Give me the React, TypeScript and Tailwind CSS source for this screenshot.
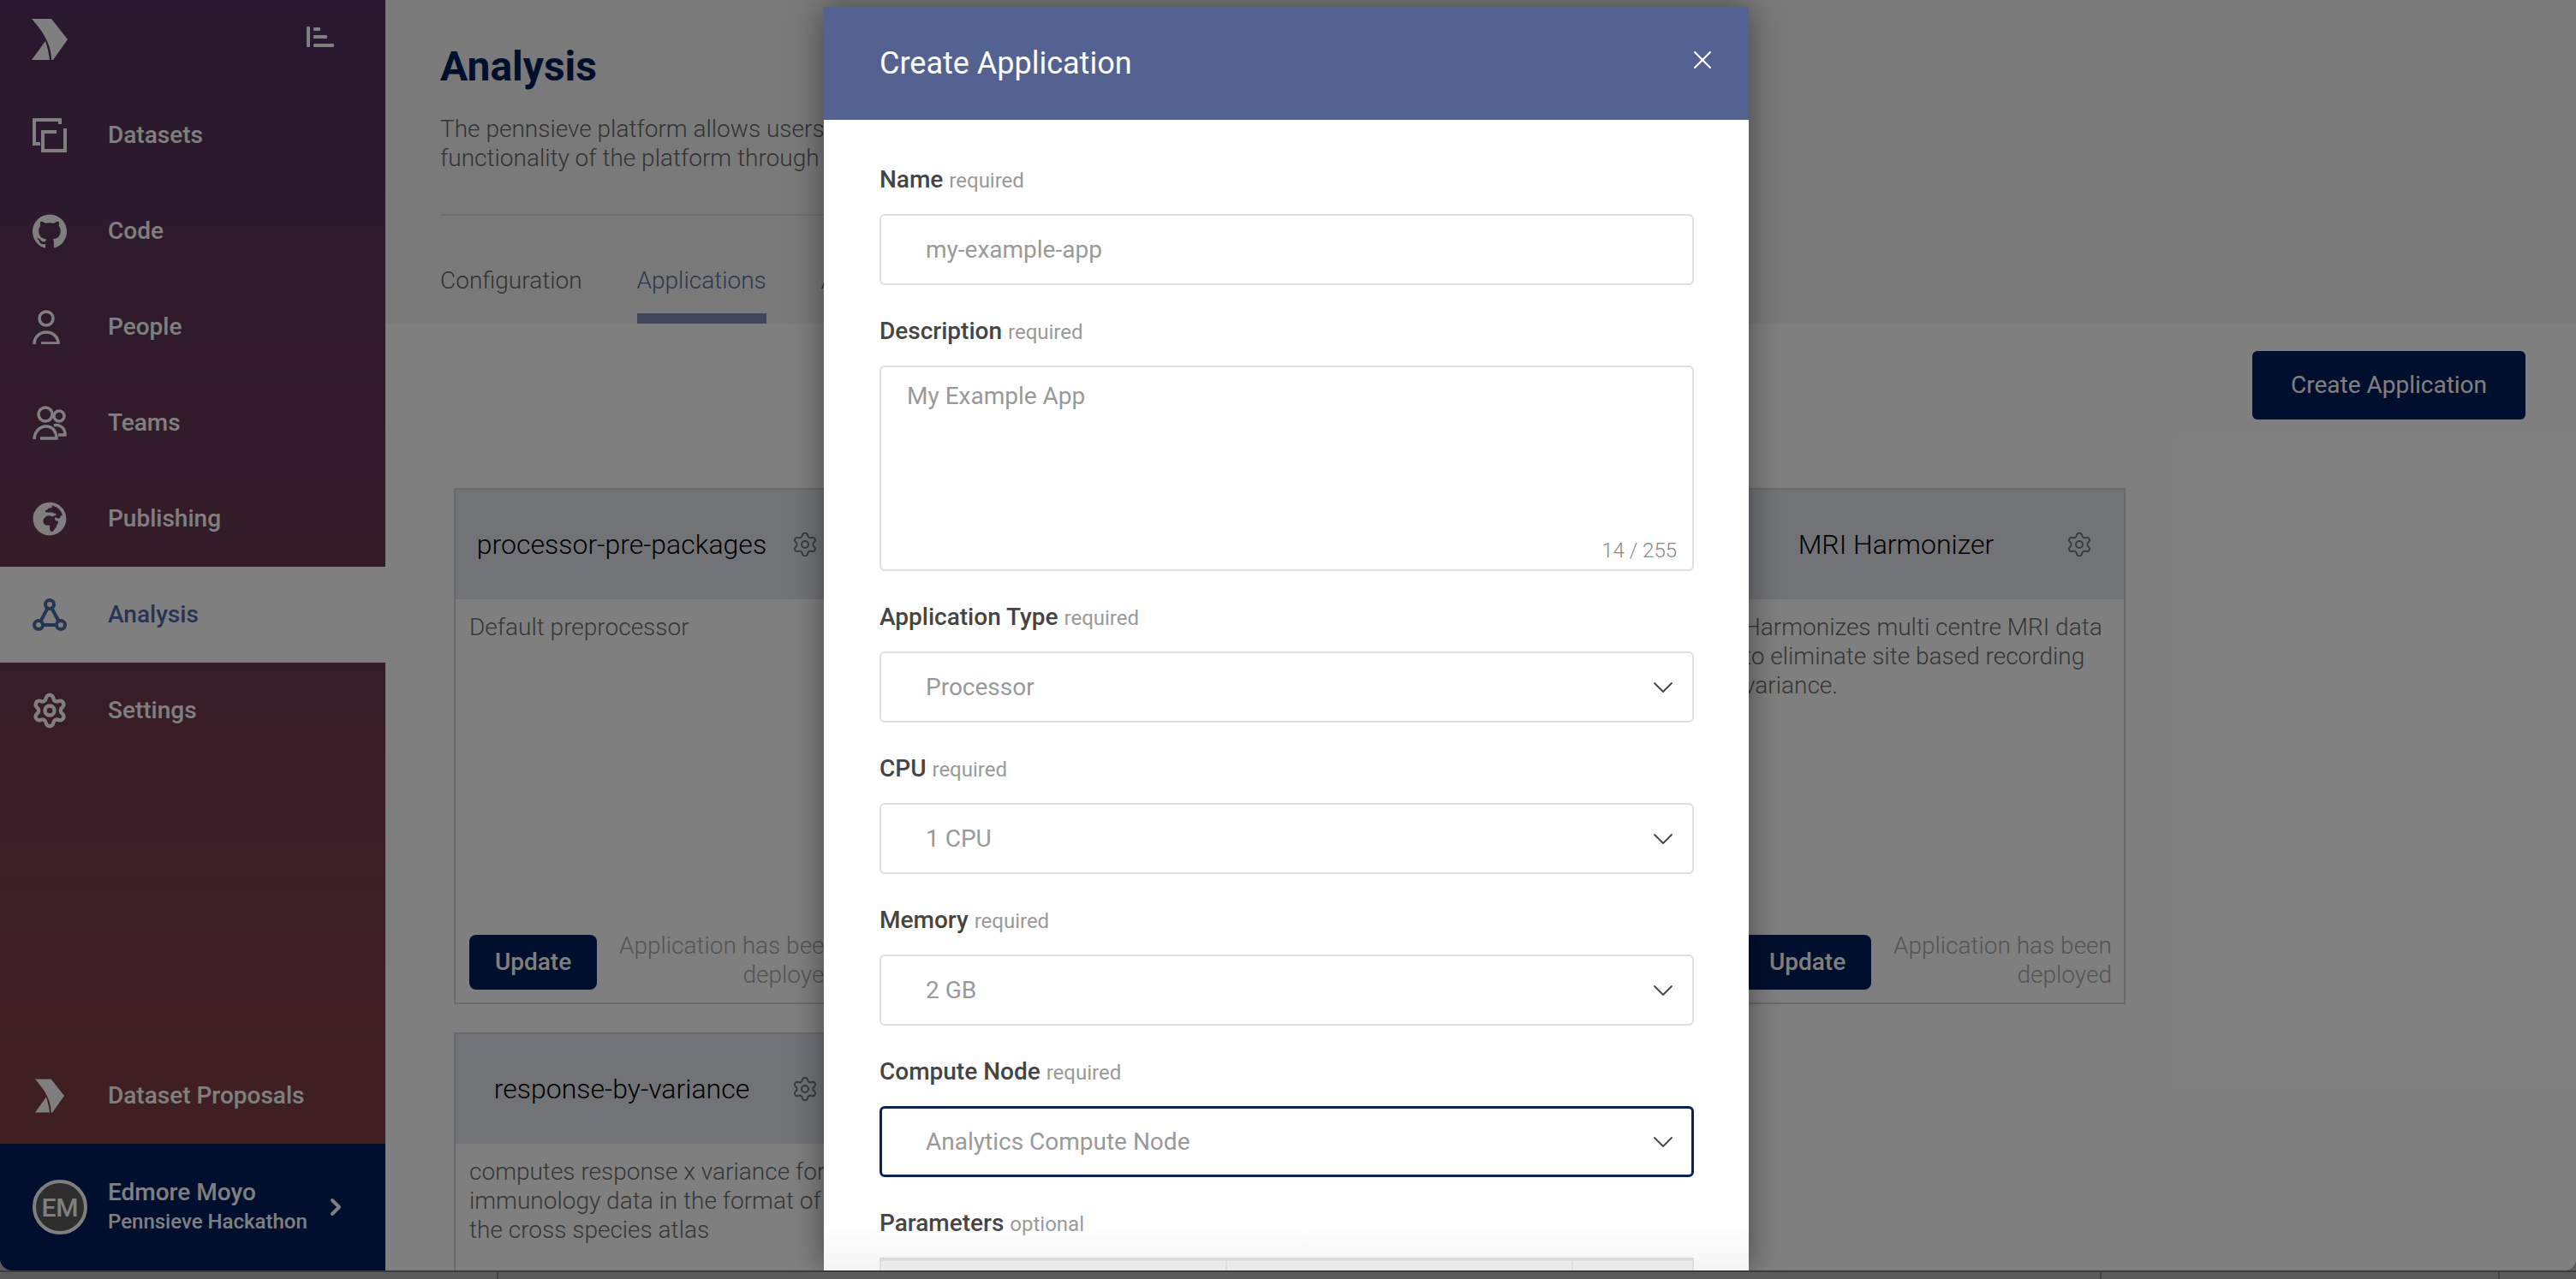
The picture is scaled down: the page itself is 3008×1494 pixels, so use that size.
import { ChevronDown, ChevronRight, Settings, X } from "lucide-react";
import { FaGlobeAfrica } from "react-icons/fa";
import { SiGithub } from "react-icons/si";
import type { ReactNode } from "react";

function Logo({ className }: { className: string }) {
  return (
    <svg viewBox="0 0 42 48" className={className} fill="currentColor">
      <path d="M0 0H23L42 24L25 48H23C23 38 20 30 17 24C13 15 6 7 0 0Z" />
      <path d="M0 48L16 26C18 32 20 40 21 48Z" />
    </svg>
  );
}

function DatasetsIcon() {
  return (
    <svg viewBox="0 0 40 40" className="h-10 w-10" fill="none" stroke="currentColor" strokeWidth="4">
      <path d="M32 7V2H2V30H9" />
      <path d="M28 16H12V38H38V12" />
    </svg>
  );
}

function PeopleIcon() {
  return (
    <svg viewBox="0 0 40 40" className="h-10 w-10" fill="none" stroke="currentColor" strokeWidth="3.5">
      <circle cx="16" cy="10" r="8" />
      <path d="M2 40C2 32 8 26 16 26C24 26 30 32 30 39H10" />
    </svg>
  );
}

function TeamsIcon() {
  return (
    <svg viewBox="0 0 40 40" className="h-10 w-10" fill="none" stroke="currentColor" strokeWidth="3.5">
      <circle cx="15" cy="10" r="8" />
      <circle cx="31" cy="12" r="6" />
      <path d="M2 39C2 31 8 24 16 24C24 24 28 31 28 38H9" />
      <path d="M25 23C32 21 38 26 38 34H30" />
    </svg>
  );
}

function AnalysisIcon() {
  return (
    <svg viewBox="0 0 40 38" className="h-[38px] w-10" fill="none" stroke="currentColor" strokeWidth="4">
      <circle cx="20" cy="7" r="5" />
      <circle cx="7" cy="31" r="5" />
      <circle cx="33" cy="31" r="5" />
      <path d="M17.500 11.500L9.500 26.500M22.500 11.500L30.500 26.500M12 31H28" />
    </svg>
  );
}

const NAV: { label: string; icon: ReactNode; active?: boolean }[] = [
  { label: "Datasets", icon: <DatasetsIcon /> },
  { label: "Code", icon: <SiGithub className="h-10 w-10" /> },
  { label: "People", icon: <PeopleIcon /> },
  { label: "Teams", icon: <TeamsIcon /> },
  { label: "Publishing", icon: <FaGlobeAfrica className="h-10 w-10" /> },
  { label: "Analysis", icon: <AnalysisIcon />, active: true },
  { label: "Settings", icon: <Settings className="h-11 w-11 -mx-0.5" strokeWidth={2.4} /> },
];

function Sidebar() {
  return (
    <aside className="flex h-full w-[450px] shrink-0 flex-col bg-linear-to-b from-[#52305e] to-[#884040] text-white">
      <div className="flex h-[102px] shrink-0 items-start justify-between pl-[37px] pr-[60px] pt-[22px]">
        <Logo className="h-12 w-[42px]" />
        <svg viewBox="0 0 32 24" className="mt-[9px] h-6 w-8" fill="currentColor">
          <rect x="0" y="0" width="4" height="24" rx="1" />
          <rect x="8" y="1" width="8" height="4" rx="1" />
          <rect x="8" y="10" width="16" height="4" rx="1" />
          <rect x="8" y="20" width="24" height="4" rx="1" />
        </svg>
      </div>
      {NAV.map((item) => (
        <div
          key={item.label}
          className={
            item.active
              ? "flex h-[112px] shrink-0 items-center bg-white pl-[38px] text-[#506aa5]"
              : "flex h-[112px] shrink-0 items-center pl-[38px]"
          }
        >
          <span className="flex w-[88px] shrink-0">{item.icon}</span>
          <span className="text-[28px] font-medium">{item.label}</span>
        </div>
      ))}
      <div className="mt-auto flex h-[112px] shrink-0 items-center pl-[41px]">
        <span className="flex w-[85px] shrink-0">
          <Logo className="h-10 w-[34px]" />
        </span>
        <span className="text-[28px] font-medium">Dataset Proposals</span>
      </div>
      <div className="flex h-[148px] shrink-0 items-center bg-[#011f5b] pl-[38px]">
        <div className="flex h-16 w-16 shrink-0 items-center justify-center rounded-full border-4 border-white bg-[#5c5c5c] text-[30px] font-medium">
          EM
        </div>
        <div className="ml-6 flex w-[250px] flex-col">
          <span className="text-[28px] leading-[34px] font-medium">Edmore Moyo</span>
          <span className="text-[24px] leading-[34px] font-medium">Pennsieve Hackathon</span>
        </div>
        <ChevronRight className="h-8 w-8" strokeWidth={3} />
      </div>
    </aside>
  );
}

function AppCard({
  title,
  text,
  className,
  footer = true,
}: {
  title: string;
  text: string[];
  className?: string;
  footer?: boolean;
}) {
  return (
    <article className={`flex h-[603px] flex-col border-2 border-[#d4d4d4] ${className ?? ""}`}>
      <header className="flex h-[128px] shrink-0 items-center bg-[#e4e6ee]">
        <h3 className="w-[388px] text-center text-[32px] font-light text-black">{title}</h3>
        <Settings className="ml-1 h-8 w-8 text-[#76787c]" strokeWidth={1.5} />
      </header>
      <div className="flex flex-1 flex-col pt-[16px] pr-[14px] pb-[15px] pl-4">
        <p className="text-[28px] leading-[34px] font-light text-[#6c6c6c]">
          {text.map((line) => (
            <span key={line} className="block whitespace-nowrap">
              {line}
            </span>
          ))}
        </p>
        {footer && (
          <div className="mt-auto flex items-center justify-between">
            <button className="mt-1 h-16 w-[149px] rounded-lg bg-[#011f5b] text-[28px] font-medium text-white">
              Update
            </button>
            <p className="w-[270px] text-right text-[28px] leading-[34px] font-light text-[#a8a8a8]">
              Application has been deployed
            </p>
          </div>
        )}
      </div>
    </article>
  );
}

function Field({
  label,
  hint = "required",
  children,
}: {
  label: string;
  hint?: string;
  children: ReactNode;
}) {
  return (
    <div className="mb-[38px]">
      <div className="mb-6 flex h-8 items-baseline gap-[7px] leading-8">
        <span className="text-[28px] font-medium text-[#444444]">{label}</span>
        <span className="text-[24px] text-[#999999]">{hint}</span>
      </div>
      {children}
    </div>
  );
}

function Select({ value, focused }: { value: string; focused?: boolean }) {
  return (
    <div
      className={
        focused
          ? "flex h-[83px] items-center justify-between rounded-md border-[3px] border-[#0b2259] pl-[51px] pr-[13px]"
          : "flex h-[83px] items-center justify-between rounded-md border-2 border-[#dfdfe6] pl-[52px] pr-[14px]"
      }
    >
      <span className="text-[28px] text-[#999999]">{value}</span>
      <ChevronDown className="h-10 w-10 text-[#444444]" strokeWidth={1.1} />
    </div>
  );
}

function Modal() {
  return (
    <div className="absolute top-2 left-[962px] flex h-[1476px] w-[1080px] flex-col overflow-hidden bg-white shadow-[0_0_36px_rgba(0,0,0,0.45)]">
      <header className="flex h-[132px] shrink-0 items-start justify-between bg-[#536290] pl-[65px] pr-[36px] text-white">
        <h2 className="mt-[44px] text-[36px] leading-[44px]">Create Application</h2>
        <X className="mt-[44px] h-9 w-9" strokeWidth={1.4} />
      </header>
      <div className="box-content w-[951px] self-start pl-[65px] pt-[54px]">
        <Field label="Name">
          <div className="flex h-[83px] items-center rounded-md border-2 border-[#dfdfe6] pl-[52px]">
            <span className="text-[28px] text-[#999999]">my-example-app</span>
          </div>
        </Field>
        <Field label="Description">
          <div className="relative h-[240px] rounded-md border-2 border-[#dfdfe6] pl-[30px] pt-[14px]">
            <span className="text-[28px] leading-[40px] text-[#999999]">My Example App</span>
            <span className="absolute right-[18px] bottom-[4px] text-[24px] font-light text-[#888888]">
              14 / 255
            </span>
          </div>
        </Field>
        <Field label="Application Type">
          <Select value="Processor" />
        </Field>
        <Field label="CPU">
          <Select value="1 CPU" />
        </Field>
        <Field label="Memory">
          <Select value="2 GB" />
        </Field>
        <Field label="Compute Node">
          <Select value="Analytics Compute Node" focused />
        </Field>
        <Field label="Parameters" hint="optional">
          <div className="grid h-10 grid-cols-[404px_404px_1fr] border-2 border-t-4 border-[#d4d4d4] bg-[#ececec]">
            <div className="border-r-2 border-[#d4d4d4]" />
            <div className="border-r-2 border-[#d4d4d4]" />
            <div />
          </div>
        </Field>
      </div>
      <div className="absolute inset-x-0 bottom-0 h-[52px] bg-linear-to-b from-white/0 to-[#e8e8e8]/50" />
    </div>
  );
}

export default function App() {
  return (
    <div className="h-[1494px] w-[3008px] overflow-hidden bg-[#5b5b5b] font-['Roboto',sans-serif]">
      <div className="relative flex h-[1484px] overflow-hidden rounded-b-[14px] bg-white">
        <Sidebar />
        <main className="min-w-0 flex-1">
          <section className="h-[378px] bg-[#f5f5f5] pl-16 pr-[62px]">
            <h1 className="pt-[47px] text-[48px] leading-[62px] font-bold text-[#011f5b]">Analysis</h1>
            <p className="mt-[25px] h-[116px] text-[28px] leading-[34px] font-light text-[#666666]">
              <span className="block">The pennsieve platform allows users</span>
              <span className="block">functionality of the platform through</span>
            </p>
            <nav className="flex h-[128px] w-[800px] gap-16 border-t-2 border-[#dcdcdc] text-[28px] font-light text-[#666666]">
              <span className="pt-[55px]">Configuration</span>
              <span className="h-[126px] border-b-12 border-[#808cb4] pt-[55px] text-[#5c6f9d]">Applications</span>
              <span className="pt-[55px]">Activity</span>
            </nav>
          </section>
          <div className="flex justify-end pt-8 pr-[59px]">
            <button className="h-20 w-[319px] rounded-md bg-[#011f5b] text-[28px] text-white">
              Create Application
            </button>
          </div>
          <div className="mt-20 ml-20 grid w-[1952px] grid-cols-4 gap-x-8 gap-y-[33px]">
            <AppCard title="processor-pre-packages" text={["Default preprocessor"]} />
            <AppCard
              className="col-start-4"
              title="MRI Harmonizer"
              text={["Harmonizes multi centre MRI data", "to eliminate site based recording", "variance."]}
            />
            <AppCard
              className="col-start-1"
              footer={false}
              title="response-by-variance"
              text={["computes response x variance for", "immunology data in the format of", "the cross species atlas"]}
            />
          </div>
        </main>
        <div className="absolute inset-0 bg-black/50" />
        <Modal />
      </div>
      <div className="flex h-2.5 border-t-2 border-[#3c3c3c]">
        <div className="ml-[580px] w-[1874px] border-x-2 border-[#444444]" />
        <div className="w-[465px] border-r-2 border-[#444444]" />
      </div>
    </div>
  );
}
